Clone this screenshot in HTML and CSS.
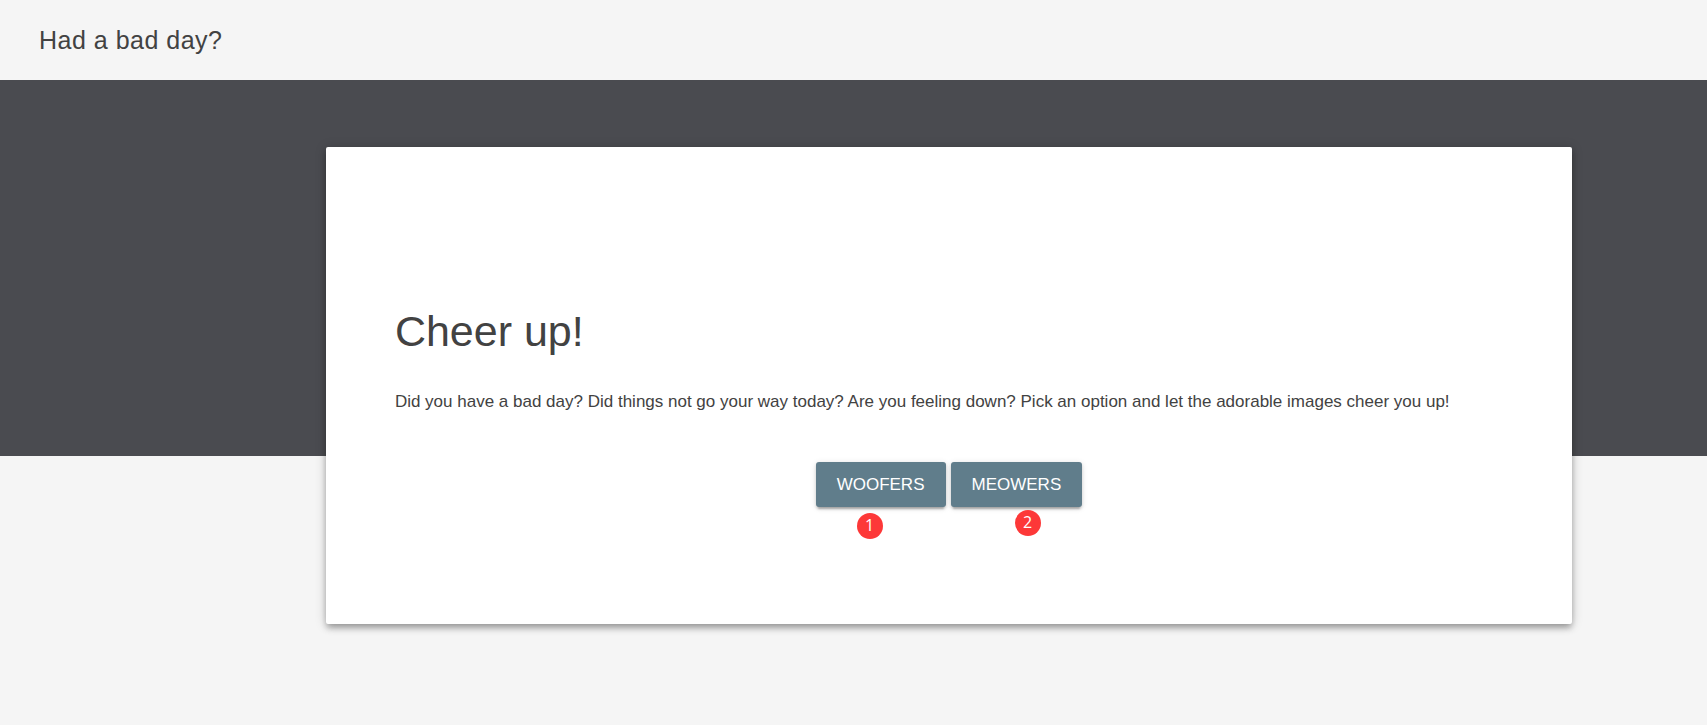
FILE: index.html
```html
<!DOCTYPE html>
<html lang="en">
<head>
    <meta charset="UTF-8">
    <meta name="viewport" content="width=device-width, initial-scale=1.0">
    <title>Had a bad day?</title>
    <link rel="stylesheet" href="styles.css">
</head>
<body>
    <header class="header">
        <span class="header-title">Had a bad day?</span>
    </header>
    <div class="ribbon"></div>
    <main class="main">
        <div class="card">
            <h3>Cheer up!</h3>
            <p>Did you have a bad day? Did things not go your way today? Are you feeling down? Pick an option and let the adorable images cheer you up!</p>
            <form class="options" method="get">
                <div class="option">
                    <button class="button" type="submit" name="category" value="woofers">WOOFERS</button>
                    <span class="badge badge-woofers">1</span>
                </div>
                <div class="option">
                    <button class="button" type="submit" name="category" value="meowers">MEOWERS</button>
                    <span class="badge badge-meowers">2</span>
                </div>
            </form>
        </div>
    </main>
</body>
</html>
```

FILE: styles.css
```css
* {
    box-sizing: border-box;
}

body {
    margin: 0;
    min-height: 100vh;
    background: #f5f5f5;
    color: #424242;
    font-family: "Liberation Sans", Arial, sans-serif;
    font-size: 17px;
}

.header {
    display: flex;
    align-items: center;
    height: 80px;
    padding: 0 39px;
}

.header-title {
    font-size: 25px;
    letter-spacing: 0.02em;
}

.ribbon {
    height: 376px;
    background: #4a4b50;
}

/* the card is pulled up over the ribbon */
.main {
    width: 73%;
    margin: -309px 135px 0 auto;
}

.card {
    padding: 154px 69px 116px;
    background: #fff;
    border-radius: 2px;
    box-shadow: 0 5px 6px rgba(0, 0, 0, 0.14), 0 4px 6px -2px rgba(0, 0, 0, 0.2), 0 1px 12px rgba(0, 0, 0, 0.2);
}

.card h3 {
    margin: 0 0 26px;
    font-size: 43px;
    font-weight: 400;
    line-height: 60px;
}

.card p {
    margin: 0 0 45px;
    line-height: 30px;
}

.options {
    display: flex;
    justify-content: center;
    gap: 5px;
    padding-bottom: 1px;
}

.option {
    position: relative;
}

.button {
    height: 45px;
    padding: 0 21px;
    border: none;
    border-radius: 3px;
    background: #607d8b;
    color: #fff;
    font-family: inherit;
    font-size: 17px;
    cursor: pointer;
    box-shadow: 0 2px 3px rgba(0, 0, 0, 0.14), 0 4px 2px -2px rgba(0, 0, 0, 0.2), 0 1px 6px rgba(0, 0, 0, 0.12);
}

.badge {
    position: absolute;
    width: 26px;
    height: 26px;
    border-radius: 50%;
    background: #fd3838;
    color: #fff;
    font-family: "Open Sans", "Noto Sans", sans-serif;
    font-size: 16px;
    line-height: 24px;
    text-align: center;
}

.badge-woofers {
    top: 51px;
    left: 41px;
}

.badge-meowers {
    top: 48px;
    left: 64px;
}
```
